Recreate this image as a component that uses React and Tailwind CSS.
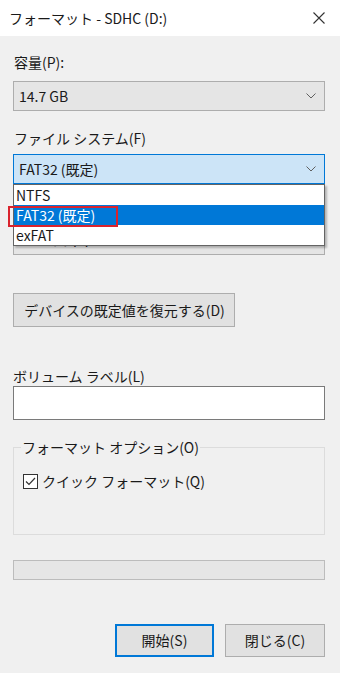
import { useState } from "react";

const font = "font-['Noto_Sans_CJK_JP','Noto_Sans',sans-serif]";

function Chevron() {
  return (
    <svg width="10" height="6" viewBox="0 0 10 6" className="shrink-0">
      <path d="M0.5 0.5 L5 5 L9.5 0.5" fill="none" stroke="#606060" strokeWidth="1" />
    </svg>
  );
}

function Select({ value, focused, children }) {
  return (
    <div className="relative">
      <div
        className={`h-[30px] flex items-center justify-between pl-[5px] pr-[8px] border ${
          focused ? "bg-[#cce4f7] border-[#0078d7]" : "bg-[#e5e5e5] border-[#adadad]"
        }`}
      >
        <span className="text-[14px] text-[#1a1a1a]">{value}</span>
        <Chevron />
      </div>
      {children}
    </div>
  );
}

export default function App() {
  const [quick, setQuick] = useState(true);

  return (
    <div className={`w-[340px] h-[673px] bg-[#f0f0f0] flex flex-col ${font}`}>
      {/* Title bar */}
      <div className="h-[36px] bg-white flex items-center justify-between pl-[9px] pr-[15px] shrink-0">
        <span className="text-[14px] text-[#1a1a1a]">フォーマット - SDHC (D:)</span>
        <svg width="12" height="12" viewBox="0 0 12 12">
          <path d="M0.5 0.5 L11.5 11.5 M11.5 0.5 L0.5 11.5" stroke="#333" strokeWidth="1.1" />
        </svg>
      </div>

      <div className="px-[13px] pr-[15px] flex flex-col">
        <div className="mt-[16px] h-[20px] leading-[20px] text-[14px] text-[#1a1a1a] pl-[1px]">容量(P):</div>
        <div className="mt-[9px]">
          <Select value="14.7 GB" />
        </div>

        <div className="mt-[17px] h-[20px] leading-[20px] text-[14px] text-[#1a1a1a] pl-[1px]">ファイル システム(F)</div>
        <div className="mt-[6px]">
          <Select value="FAT32 (既定)" focused>
            {/* Open dropdown list */}
            <div className="absolute left-0 right-0 top-[30px] z-10 bg-white border border-[#646464] shadow-[2px_2px_2px_rgba(0,0,0,0.25)] text-[14px]">
              <div className="h-[20px] leading-[20px] pl-[2px] text-[#1a1a1a]">NTFS</div>
              <div className="h-[20px] leading-[20px] pl-[2px] bg-[#0078d7] text-white">FAT32 (既定)</div>
              <div className="h-[20px] leading-[20px] pl-[2px] text-[#1a1a1a]">exFAT</div>
            </div>
            <div className="absolute left-[-5px] top-[52px] w-[110px] h-[21px] border-[2.5px] border-[#d9232d] z-20" />
          </Select>
        </div>

        {/* label hidden under the open list */}
        <div className="mt-[17px] h-[20px]" />
        <div className="mt-[4px]">
          <Select value="4096 バイト" />
        </div>

        <button className="mt-[38px] self-start w-[222px] h-[34px] bg-[#e1e1e1] border border-[#adadad] text-[14px] text-[#1a1a1a] pl-[1px]">
          デバイスの既定値を復元する(D)
        </button>

        <div className="mt-[39px] h-[20px] leading-[20px] text-[14px] text-[#1a1a1a]">ボリューム ラベル(L)</div>
        <input className="h-[34px] bg-white border border-[#7a7a7a] outline-none px-[4px] text-[14px]" />

        <fieldset className="mt-[17px] h-[98px] border border-[#dcdcdc] px-[9px] pt-0 mx-0">
          <legend className="px-[1px] text-[14px] text-[#1a1a1a] leading-[20px] ml-[-2px]">フォーマット オプション(O)</legend>
          <label className="mt-[14px] flex items-center gap-[4px] cursor-pointer" onClick={() => setQuick(!quick)}>
            <span className="w-[15px] h-[15px] bg-white border border-[#333] flex items-center justify-center">
              {quick && (
                <svg width="11" height="9" viewBox="0 0 11 9">
                  <path d="M1 4.5 L4 7.5 L10 1" fill="none" stroke="#333" strokeWidth="1.2" />
                </svg>
              )}
            </span>
            <span className="text-[14px] text-[#1a1a1a]">クイック フォーマット(Q)</span>
          </label>
        </fieldset>

        <div className="mt-[25px] h-[20px] bg-[#e6e6e6] border border-[#bcbcbc]" />

        <div className="mt-[44px] flex justify-end gap-[11px]">
          <button className="w-[99px] h-[33px] bg-[#e1e1e1] border-2 border-[#0078d7] text-[14px] text-[#1a1a1a]">
            開始(S)
          </button>
          <button className="w-[100px] h-[33px] bg-[#e1e1e1] border border-[#adadad] text-[14px] text-[#1a1a1a]">
            閉じる(C)
          </button>
        </div>
      </div>
    </div>
  );
}
